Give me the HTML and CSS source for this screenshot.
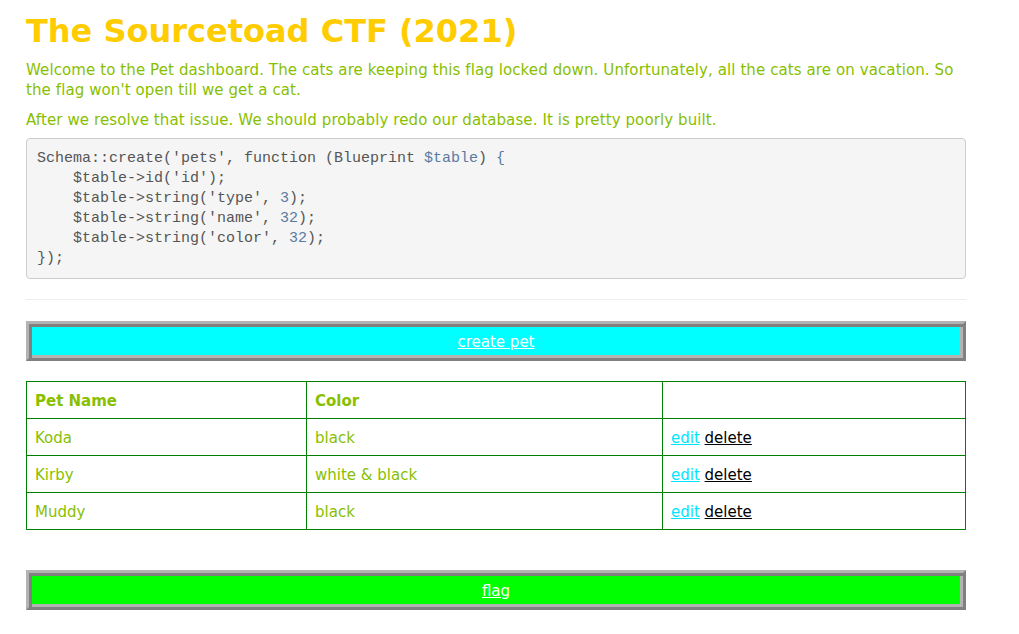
FILE: index.html
```html
<!DOCTYPE html>
<html>
<head>
<meta charset="utf-8">
<title>The Sourcetoad CTF (2021)</title>
<link rel="stylesheet" href="styles.css">
</head>
<body>
<div class="container">
  <h1 class="title">The Sourcetoad CTF (2021)</h1>
  <p class="intro">Welcome to the Pet dashboard. The cats are keeping this flag locked down. Unfortunately, all the cats are on vacation. So the flag won't open till we get a cat.</p>
  <p class="intro intro-last">After we resolve that issue. We should probably redo our database. It is pretty poorly built.</p>
  <pre class="code">Schema::create('pets', function (Blueprint <span class="var">$table</span>) <span class="var">{</span>
    $table-&gt;id('id');
    $table-&gt;string('type', <span class="num">3</span>);
    $table-&gt;string('name', <span class="num">32</span>);
    $table-&gt;string('color', <span class="num">32</span>);
});</pre>
  <hr class="rule">
  <div class="bigbtn bigbtn-cyan"><a href="#" class="btnlink">create pet</a></div>
  <table class="pets">
    <tr class="head">
      <th class="c1">Pet Name</th>
      <th class="c2">Color</th>
      <th class="c3"></th>
    </tr>
    <tr>
      <td>Koda</td>
      <td>black</td>
      <td class="actions"><a href="#" class="edit">edit</a> <a href="#" class="delete">delete</a></td>
    </tr>
    <tr>
      <td>Kirby</td>
      <td>white &amp; black</td>
      <td class="actions"><a href="#" class="edit">edit</a> <a href="#" class="delete">delete</a></td>
    </tr>
    <tr>
      <td>Muddy</td>
      <td>black</td>
      <td class="actions"><a href="#" class="edit">edit</a> <a href="#" class="delete">delete</a></td>
    </tr>
  </table>
  <div class="bigbtn bigbtn-green"><a href="#" class="btnlink">flag</a></div>
</div>
</body>
</html>
```
FILE: styles.css
```css
html, body {
  margin: 0;
  padding: 0;
  background: #ffffff;
}
body {
  font-family: "Comic Sans MS", "DejaVu Sans", sans-serif;
  font-size: 15px;
  color: #88c000;
}
.container {
  width: 940px;
  margin-left: 26px;
}
.title {
  margin: 9px 0 0 0;
  font-size: 32px;
  line-height: 44px;
  font-weight: bold;
  color: #ffcc00;
}
.intro {
  margin: 7px 0 10px 0;
  line-height: 20px;
  font-size: 15px;
  letter-spacing: 0.1px;
}
.intro-last { margin-bottom: 8px; }
.code {
  margin: 0 0 10px 0;
  padding: 9.5px 10px;
  background: #f5f5f5;
  border: 1px solid #cccccc;
  border-radius: 4px;
  font-family: "Liberation Mono", "Courier New", monospace;
  font-size: 15px;
  line-height: 20px;
  color: #555555;
}
.code .var { color: #5b7ba0; }
.code .num { color: #5b7ba0; }
.rule {
  margin: 20px 0 21px 0;
  border: 0;
  border-top: 1px solid #eeeeee;
}
.bigbtn {
  box-sizing: border-box;
  height: 40px;
  border-style: solid;
  border-width: 3px;
  border-color: #b3b3b3 #808080 #808080 #b3b3b3;
  box-shadow: inset 3px 3px 0 #808080, inset -3px -3px 0 #b3b3b3;
  display: flex;
  align-items: center;
  justify-content: center;
}
.bigbtn-cyan { background: #00ffff; }
.bigbtn-green { background: #00ff00; margin-top: 40px; }
.btnlink {
  color: #ffffff;
  text-decoration: underline;
  font-size: 15px;
  padding-top: 2px;
}
.pets {
  margin-top: 20px;
  width: 940px;
  border-collapse: collapse;
}
.pets th, .pets td {
  border: 1px solid #008000;
  height: 34px;
  padding: 2px 8px 0 8px;
  text-align: left;
  font-size: 15px;
}
.pets th { font-weight: bold; }
.c1 { width: 263px; }
.c2 { width: 339px; }
.edit { color: #00e5ff; text-decoration: underline; }
.delete { color: #000000; text-decoration: underline; }
```
